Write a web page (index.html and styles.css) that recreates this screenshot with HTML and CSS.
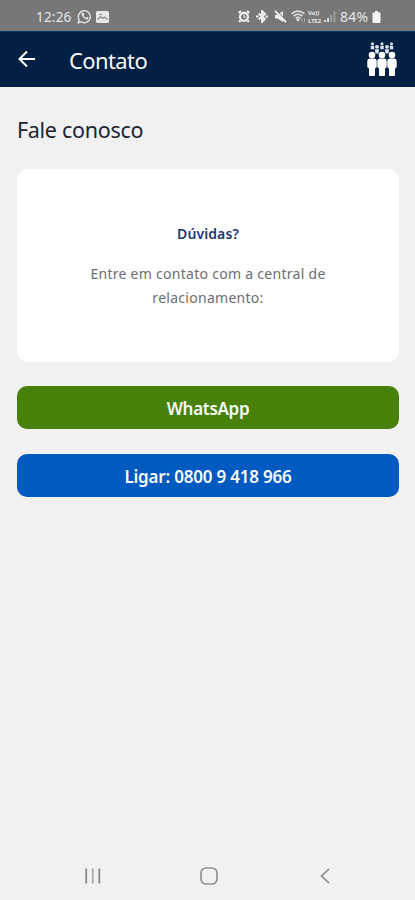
FILE: index.html
```html
<!DOCTYPE html>
<html lang="pt-BR">
<head>
<meta charset="utf-8">
<title>Contato</title>
<link rel="stylesheet" href="styles.css">
</head>
<body>
<div class="status">
  <span class="time">12:26</span>
  <svg class="wa" width="15" height="15" viewBox="0 0 15 15" fill="none" stroke="#e4e4e4" stroke-width="1.4"><path d="M1.3 13.7l.8-3.1a6 6 0 1 1 2.3 2.3z"/><path d="M4.500 4c-.2 3.500 3 6.600 6.400 6.600l.8-1.800-2-1-.9.9C7.600 8.200 6.800 7.400 6.500 6.600l.8-.9-.8-2z" fill="#e4e4e4" stroke="none"/></svg>
  <svg class="pic" width="13" height="12" viewBox="0 0 13 12"><rect width="13" height="12" rx="1.500" fill="#e8e8e8"/><path d="M1.500 8.500l3-3 2 2 2-1.500 3 2.500" stroke="#888" stroke-width="1.200" fill="none"/><path d="M3 3.500h3" stroke="#999" stroke-width="1.200"/></svg>
  <div class="signals">
    <svg width="12" height="13" viewBox="0 0 12 13" fill="none" stroke="#f0f0f0" stroke-width="2.200"><circle cx="6" cy="6.800" r="4"/><path d="M.6 3L3 1M11.400 3L9 1M2.500 10.500l-1.300 1.500M9.500 10.500l1.300 1.500"/><path d="M6 4.500v2.800h2" stroke-width="1.100"/></svg>
    <svg width="12" height="13" viewBox="0 0 12 13" fill="none" stroke="#f0f0f0" stroke-width="1.900"><path d="M2.500 3.500l6.500 5.500-3 3V1l3 3-6.500 5.500"/><path d="M0 6.500h2.500M9.500 6.500H12"/></svg>
    <svg width="13" height="13" viewBox="0 0 13 13"><path d="M1 5h2.500L9 1v11L3.500 8.500H1z" fill="#f0f0f0"/><path d="M2 .5l11 11" stroke="#777" stroke-width="1.300"/><path d="M1 1l11 11" stroke="#f0f0f0" stroke-width="1.800"/></svg>
    <svg width="16" height="13" viewBox="0 0 16 13" fill="none" stroke="#dedede" stroke-width="1.700"><path d="M.7 3.800c3.500-3.500 9-3.500 12.600 0M2.700 6.100c2.500-2.300 6.100-2.300 8.600 0M4.700 8.300c1.400-1.200 3.200-1.200 4.600 0"/><path d="M5 9L7 12l2-3z" fill="#dedede" stroke="none"/><path d="M11 8v4M13.500 8v4" stroke="#aaa" stroke-width="1"/></svg>
    <span class="lte">Vo))<br>LTE2</span>
    <svg width="12" height="13" viewBox="0 0 12 13"><path d="M0 10h2v2H0zM3 8h2v4H3z" fill="#ddd"/><path d="M6 5h2v7H6zM9.500 1h2v11h-2z" fill="#9d9d9d"/></svg>
    <span class="percent">84%</span>
    <svg class="battery" width="9" height="12" viewBox="0 0 9 12"><path d="M3 0h3v1.500h1.500q1 0 1 1V11q0 1-1 1h-6q-1 0-1-1V2.500q0-1 1-1H3z" fill="#f5f5f5"/></svg>
  </div>
</div>
<header class="bar">
  <svg class="back" width="18" height="18" viewBox="0 0 18 18" fill="none" stroke="#fff" stroke-width="2"><path d="M17 9H2M9 1.500L1.500 9 9 16.500"/></svg>
  <h1>Contato</h1>
  <svg class="people" width="30" height="36" viewBox="0 0 30 36">
    <defs><g id="person"><circle cx="0" cy="3" r="3.300"/><path d="M-2.500 6.500h5q2.200 0 2.200 2.500v5.500q0 1.500-1.700 2V23q0 1-1 1h-4q-1 0-1-1v-6.500q-1.700-.5-1.700-2V9q0-2.500 2.200-2.500z"/></g></defs>
    <g fill="#dfe5ee"><circle cx="5.500" cy="1.700" r="1.500"/><circle cx="15" cy="1.700" r="1.500"/><circle cx="24.500" cy="1.700" r="1.500"/><path d="M3.800 3.800h3.400v3.500H3.800zM13.300 3.800h3.400v3.500h-3.400zM22.800 3.800h3.400v3.500h-3.400z"/><circle cx="10" cy="4.800" r="1.900"/><circle cx="20" cy="4.800" r="1.900"/><path d="M7.800 7.300h4.400l-.7 4.200h-3zM17.800 7.300h4.400l-.7 4.200h-3z"/></g>
    <g fill="#fff"><use href="#person" x="5" y="10"/><use href="#person" x="15" y="10"/><use href="#person" x="25" y="10"/></g>
  </svg>
</header>
<main>
  <h2>Fale conosco</h2>
  <section class="card">
    <h3>Dúvidas?</h3>
    <p>Entre em contato com a central de<br>relacionamento:</p>
  </section>
  <button class="btn green">WhatsApp</button>
  <button class="btn blue">Ligar: 0800 9 418 966</button>
</main>
<nav>
  <svg width="16" height="16" viewBox="0 0 16 16" stroke="#888" stroke-width="1.800"><path d="M1.200 .5v15M14.300 .5v15"/><path d="M7.800 .5v15" stroke="#aaa"/></svg>
  <svg class="home" width="18" height="18" viewBox="0 0 18 18" fill="none" stroke="#929292" stroke-width="1.700"><rect x="1" y="1" width="16" height="16" rx="5"/></svg>
  <svg width="10" height="16" viewBox="0 0 10 16" fill="none" stroke="#888" stroke-width="1.700"><path d="M9 1L1.500 8 9 15"/></svg>
</nav>
</body>
</html>
```
FILE: styles.css
```css
* { box-sizing: border-box; }
body {
  margin: 0;
  height: 900px;
  display: flex;
  flex-direction: column;
  overflow: hidden;
  background: #f1f1f1;
  font-family: "Noto Sans", sans-serif;
}
svg { display: block; flex: none; }
h1, h2, h3, p { margin: 0; font-weight: 400; }
.status {
  height: 31px;
  flex: none;
  display: flex;
  align-items: center;
  padding: 2px 34px 0 36px;
  background: #777;
  color: #e6e6e6;
  font-size: 13.5px;
  line-height: 20px;
}
.time { width: 41px; letter-spacing: .2px; }
.pic { margin-left: 4px; }
.signals { margin-left: auto; display: flex; align-items: center; }
.signals svg:nth-child(2),
.signals svg:nth-child(3) { margin-left: 6px; }
.signals svg:nth-child(4) { margin-left: 4px; }
.lte { width: 16px; margin-left: 1px; font-size: 6px; font-weight: 700; line-height: 8px; letter-spacing: -.1px; }
.percent { margin-left: 4px; width: 32px; font-size: 14px; letter-spacing: .3px; }
.bar {
  height: 56px;
  flex: none;
  display: flex;
  align-items: center;
  padding: 0 18px;
  background: #022043;
  border-top: 1px solid #0a3560;
  border-bottom: 1px solid #11183a;
  color: #f7f8fa;
}
.bar h1 { margin: 2px 0 0 33px; font-size: 22px; line-height: 30px; letter-spacing: -.6px; }
.people { margin: 2px 0 0 auto; }
main { flex: 1; padding: 27px 16px 0 17px; }
h2 { height: 32px; font-size: 21.500px; line-height: 32px; letter-spacing: -.3px; color: #20242e; }
.card {
  height: 193px;
  margin-top: 23px;
  padding-top: 53px;
  border-radius: 11px;
  background: #fff;
  text-align: center;
}
.card h3 { font-size: 14px; line-height: 24px; font-weight: 600; letter-spacing: .1px; color: #1c3a78; }
.card p { margin-top: 16px; font-size: 14px; line-height: 24px; letter-spacing: .28px; color: #6b6d70; }
.btn {
  display: block;
  width: 100%;
  height: 43px;
  margin-top: 24px;
  padding: 2px 0 0;
  border: 0;
  border-radius: 10px;
  color: #f8fbf8;
  font: 600 17px/24px "Noto Sans", sans-serif;
  letter-spacing: -.3px;
}
.green { background: #47810a; }
.blue { margin-top: 25px; background: #005ac0; letter-spacing: -.2px; }
nav {
  height: 48px;
  flex: none;
  display: flex;
  align-items: center;
  justify-content: space-between;
  padding: 0 85px;
}
.home { margin-right: 3px; }
```
